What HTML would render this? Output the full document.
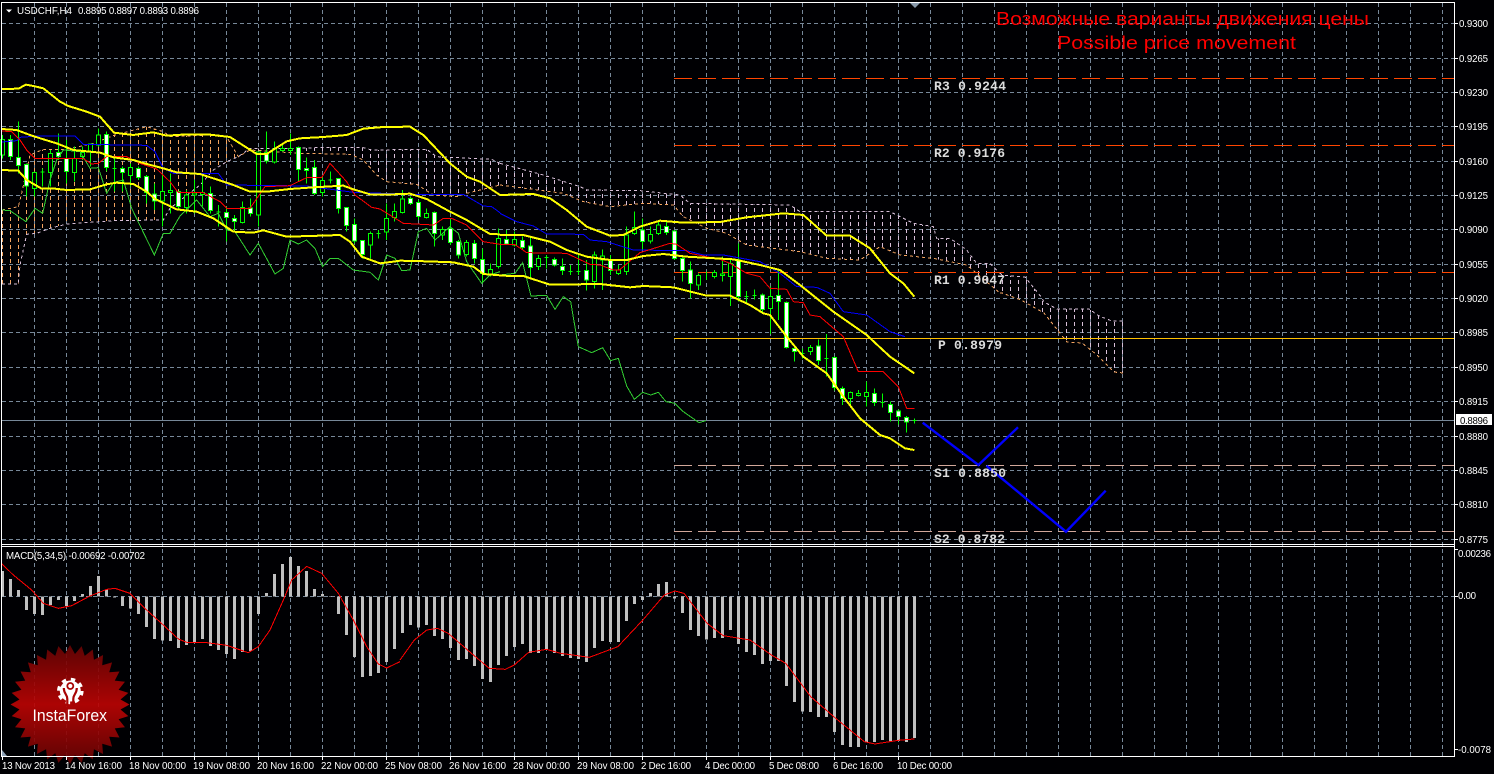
<!DOCTYPE html>
<html><head><meta charset="utf-8"><title>USDCHF,H4</title>
<style>
html,body{margin:0;padding:0;background:#000;width:1494px;height:774px;overflow:hidden}
svg{position:absolute;left:0;top:0;display:block}
svg path,svg polyline,svg polygon{vector-effect:non-scaling-stroke}
text{font-family:"Liberation Sans","Noto Sans CJK SC",sans-serif;fill:#fff}
.ax text{font-size:9.7px}
.pv text{font-family:"Liberation Mono",monospace;font-weight:bold;font-size:13px;fill:#dcdcdc}
</style></head><body>
<svg width="1494" height="774" viewBox="0 0 1494 774" xmlns="http://www.w3.org/2000/svg">
<defs>
<pattern id="gv" x="34" y="3" width="32" height="7" patternUnits="userSpaceOnUse"><rect width="1" height="4" fill="#778899"/></pattern>
<pattern id="co" width="24" height="21" patternUnits="userSpaceOnUse"><rect x="6" width="3" height="12" fill="#f4a460"/></pattern>
<pattern id="ct1" width="24" height="21" patternUnits="userSpaceOnUse"><rect x="6" width="3" height="12" fill="#d8bfd8"/></pattern>
<pattern id="ct2" width="24" height="21" patternUnits="userSpaceOnUse"><rect x="18" width="3" height="12" fill="#d8bfd8"/></pattern>
<pattern id="ct3" width="8" height="7" patternUnits="userSpaceOnUse"><rect x="2" width="1" height="4" fill="#d8bfd8"/></pattern>
<linearGradient id="lg" x1="0" y1="0" x2="0" y2="1"><stop offset="0" stop-color="#640404"/><stop offset=".5" stop-color="#bb0404"/><stop offset="1" stop-color="#640404"/></linearGradient>
<clipPath id="star">
<circle cx="0" cy="0" r="50.5"/>
<polygon points="0,-59.5 33,0 0,59.5 -33,0"/>
<polygon points="0,-59.5 33,0 0,59.5 -33,0" transform="rotate(11.25)"/>
<polygon points="0,-59.5 33,0 0,59.5 -33,0" transform="rotate(22.5)"/>
<polygon points="0,-59.5 33,0 0,59.5 -33,0" transform="rotate(33.75)"/>
<polygon points="0,-59.5 33,0 0,59.5 -33,0" transform="rotate(45)"/>
<polygon points="0,-59.5 33,0 0,59.5 -33,0" transform="rotate(56.25)"/>
<polygon points="0,-59.5 33,0 0,59.5 -33,0" transform="rotate(67.5)"/>
<polygon points="0,-59.5 33,0 0,59.5 -33,0" transform="rotate(78.75)"/>
<polygon points="0,-59.5 33,0 0,59.5 -33,0" transform="rotate(90)"/>
<polygon points="0,-59.5 33,0 0,59.5 -33,0" transform="rotate(101.25)"/>
<polygon points="0,-59.5 33,0 0,59.5 -33,0" transform="rotate(112.5)"/>
<polygon points="0,-59.5 33,0 0,59.5 -33,0" transform="rotate(123.75)"/>
<polygon points="0,-59.5 33,0 0,59.5 -33,0" transform="rotate(135)"/>
<polygon points="0,-59.5 33,0 0,59.5 -33,0" transform="rotate(146.25)"/>
<polygon points="0,-59.5 33,0 0,59.5 -33,0" transform="rotate(157.5)"/>
<polygon points="0,-59.5 33,0 0,59.5 -33,0" transform="rotate(168.75)"/>
</clipPath>
</defs>
<rect width="1494" height="774" fill="#000003"/>

<!-- grid -->
<rect x="34" y="3" width="1409" height="753" fill="url(#gv)" shape-rendering="crispEdges"/>
<path d="M2 23.5H1454M2 58.5H1454M2 92.5H1454M2 126.5H1454M2 161.5H1454M2 195.5H1454M2 229.5H1454M2 264.5H1454M2 298.5H1454M2 332.5H1454M2 367.5H1454M2 401.5H1454M2 436.5H1454M2 470.5H1454M2 504.5H1454M2 539.5H1454M2 596.5H1454" stroke="#778899" stroke-width="1" stroke-dasharray="4 3" fill="none" shape-rendering="crispEdges"/>

<!-- Ichimoku cloud -->
<g fill="none" stroke-width="1" stroke-dasharray="3 3" shape-rendering="crispEdges">
<g transform="scale(.33333)">
<polygon stroke="none" fill="url(#co)" points="6,630 55,620 65,580 80,510 90,465 130,448 200,448 280,430 345,405 440,380 490,395 510,410 630,405 680,411 715,470 680,485 640,510 600,555 510,625 490,660 340,662 200,672 150,685 110,700 80,703 60,795 55,852 6,852"/>
<polygon stroke="none" fill="url(#ct1)" points="715,470 750,445 900,445 950,443 1090,443 1115,450 1280,448 1310,470 1475,478 1500,490 1500,555 1400,580 1370,590 1300,585 1250,553 1160,545 1130,525 1090,480 1050,463 900,460 750,450"/>
<polyline stroke="#f4a460" points="6,630 55,620 65,580 80,510 90,465 130,448 200,448 280,430 345,405 440,380 490,395 510,410 630,405 680,411 715,470 750,450 900,460 1050,463 1090,480 1130,525 1160,545 1250,553 1300,585 1370,590 1400,580 1500,555"/>
<polyline stroke="#d8bfd8" points="6,852 55,852 60,795 80,703 110,700 150,685 200,672 340,662 490,660 510,625 600,555 640,510 680,485 715,470 750,445 900,445 950,443 1090,443 1115,450 1280,448 1310,470 1475,478 1500,490"/>
</g>
<g transform="translate(500,180) scale(.33333)">
<polygon stroke="none" fill="url(#ct2)" points="0,-50 130,-15 240,20 260,30 420,32 540,45 570,70 870,75 900,95 1170,95 1240,130 1300,140 1310,175 1350,175 1400,210 1430,250 1470,250 1500,280 1500,339 1400,255 1300,235 1200,225 1140,200 1080,240 980,235 900,215 740,195 680,160 620,145 550,110 520,75 430,70 330,80 250,65 190,40 0,15"/>
<polyline stroke="#d8bfd8" points="0,-50 130,-15 240,20 260,30 420,32 540,45 570,70 870,75 900,95 1170,95 1240,130 1300,140 1310,175 1350,175 1400,210 1430,250 1470,250 1500,280"/>
<polyline stroke="#f4a460" points="0,15 190,40 250,65 330,80 430,70 520,75 550,110 620,145 680,160 740,195 900,215 980,235 1080,240 1140,200 1200,225 1300,235 1400,255 1500,339"/>
</g>
<polygon stroke="none" fill="url(#ct3)" points="1000,273 1002,275 1025,277 1042,298 1044,302 1057,309 1089,309 1099,316 1112,321 1123,321 1123,373 1114,372 1097,355 1082,343 1067,342 1044,313 1021,300 1002,293 1000,293"/>
<polyline stroke="#d8bfd8" points="1000,273 1002,275 1025,277 1042,298 1044,302 1057,309 1089,309 1099,316 1112,321 1123,321"/>
<polyline stroke="#f4a460" points="1000,293 1002,293 1021,300 1044,313 1067,342 1082,343 1097,355 1114,372 1123,373"/>
</g>

<!-- price line, pivots -->
<g fill="none" shape-rendering="crispEdges">
<path d="M2 420.5H1454" stroke="#778899"/>
<path d="M674 78.5H1454M674 145.5H1454M674 272.5H1454" stroke="#ff4500" stroke-dasharray="18 6"/>
<path d="M674 338.5H1454" stroke="#ffc000"/>
<path d="M674 465.5H1454M674 531.5H1454" stroke="#d2a79a" stroke-dasharray="18 6"/>
</g>

<!-- candles part 1 -->
<g transform="scale(1 .33333)" fill="none" stroke="#00ff00" stroke-width="1" shape-rendering="crispEdges">
<path d="M2.5 405V475M10.5 405V480M18.5 365V520M26.5 490V590M34.5 515V590M42.5 505V560M50.5 450V560M58.5 400V480M66.5 420V550M74.5 440V545M82.5 440V480M90.5 430V500M98.5 385V440M106.5 395V515M114.5 470V575M122.5 500V575M130.5 490V560M138.5 500V540M146.5 525V610M154.5 550V630M162.5 520V680M170.5 520V640M178.5 575V630M186.5 570V640M194.5 540V640M202.5 530V620M210.5 560V640M218.5 615V680M226.5 620V725M234.5 645V695M242.5 605V670M250.5 595V650M258.5 455V680M266.5 395V490M274.5 425V490M282.5 430V455M290.5 400V465M298.5 440V545M306.5 472V550M314.5 480V585M322.5 530V590M330.5 515V550M338.5 535V640M346.5 622V695M354.5 655V730M362.5 720V775M370.5 695V775M378.5 690V715M386.5 610V720M394.5 610V665M402.5 570V640M410.5 590V615M418.5 600V660M426.5 625V655M434.5 635V740M442.5 680V720M450.5 655V735M458.5 720V775M466.5 720V770M474.5 720V790M482.5 745V850M490.5 790V830M498.5 685V805"/>
<path fill="#000" d="M.5 418h4v47h-4zM32.5 517h4v48h-4zM48.5 460h4v58h-4zM72.5 475h4v43h-4zM80.5 458h4v12h-4zM88.5 432h4v23h-4zM96.5 405h4v30h-4zM128.5 503h4v24h-4zM160.5 575h4v28h-4zM168.5 571h4v6h-4zM184.5 585h4v37h-4zM192.5 579h4v6h-4zM200.5 578h4v6h-4zM240.5 622h4v46h-4zM256.5 456h4v189h-4zM272.5 447h4v39h-4zM280.5 445h4v7h-4zM288.5 446h4v6h-4zM320.5 541h4v37h-4zM368.5 700h4v35h-4zM384.5 655h4v41h-4zM392.5 635h4v17h-4zM400.5 597h4v41h-4zM424.5 640h4v12h-4zM440.5 688h4v17h-4zM464.5 728h4v35h-4zM488.5 808h4v14h-4zM496.5 715h4v85h-4z"/>
<path fill="#fff" d="M8.5 418h4v52h-4zM16.5 472h4v24h-4zM24.5 493h4v65h-4zM56.5 458h4v12h-4zM64.5 475h4v40h-4zM104.5 403h4v99h-4zM120.5 505h4v13h-4zM136.5 505h4v27h-4zM144.5 530h4v48h-4zM152.5 582h4v21h-4zM176.5 575h4v45h-4zM208.5 580h4v52h-4zM224.5 638h4v14h-4zM232.5 656h4v8h-4zM248.5 624h4v16h-4zM264.5 457h4v26h-4zM296.5 443h4v65h-4zM304.5 505h4v6h-4zM312.5 503h4v77h-4zM336.5 535h4v90h-4zM344.5 622h4v54h-4zM352.5 673h4v50h-4zM360.5 722h4v42h-4zM408.5 595h4v15h-4zM416.5 607h4v43h-4zM432.5 638h4v62h-4zM448.5 686h4v42h-4zM456.5 725h4v40h-4zM472.5 730h4v45h-4zM480.5 778h4v42h-4z"/>
<path d="M40.5 516h4M112.5 505h4M216.5 636h4M328.5 540h4M376.5 700h4"/>
</g>
<!-- candles part 2 -->
<g transform="translate(0,180) scale(1 .33333)" fill="none" stroke="#00ff00" stroke-width="1" shape-rendering="crispEdges">
<path d="M506.5 150V195M514.5 155V200M522.5 170V210M530.5 170V295M538.5 225V270M546.5 225V265M554.5 232V260M562.5 235V285M570.5 255V285M578.5 225V285M586.5 240V332M594.5 215V325M602.5 208V330M610.5 225V285M618.5 255V285M626.5 140V285M634.5 95V165M642.5 115V210M650.5 140V190M658.5 120V165M666.5 125V165M674.5 150V240M682.5 230V305M690.5 245V355M698.5 280V330M706.5 275V300M714.5 270V295M722.5 230V305M730.5 240V378M738.5 190V365M746.5 333V370M754.5 328V358M762.5 340V400M770.5 320V462M778.5 265V420M786.5 365V505M794.5 505V545M802.5 505V535M810.5 495V525M818.5 478V555M826.5 462V590M834.5 530V632M842.5 620V675M850.5 635V680M858.5 630V650M866.5 605V680M874.5 625V678M882.5 640V682M890.5 665V725M898.5 688V733M906.5 708V758M914.5 716V730"/>
<path fill="#000" d="M512.5 178h4v17h-4zM536.5 235h4v25h-4zM592.5 225h4v80h-4zM600.5 228h4v12h-4zM616.5 270h4v10h-4zM624.5 165h4v110h-4zM632.5 143h4v17h-4zM648.5 163h4v20h-4zM656.5 135h4v25h-4zM696.5 287h4v28h-4zM712.5 278h4v12h-4zM720.5 282h4v5h-4zM728.5 250h4v40h-4zM768.5 350h4v35h-4zM808.5 502h4v13h-4zM848.5 637h4v18h-4zM856.5 640h4v7h-4zM864.5 637h4v13h-4z"/>
<path fill="#fff" d="M504.5 178h4v14h-4zM520.5 182h4v21h-4zM528.5 198h4v64h-4zM552.5 238h4v17h-4zM560.5 259h4v13h-4zM584.5 272h4v28h-4zM608.5 240h4v32h-4zM640.5 150h4v34h-4zM664.5 140h4v18h-4zM672.5 153h4v82h-4zM680.5 235h4v37h-4zM688.5 270h4v40h-4zM736.5 240h4v110h-4zM760.5 345h4v43h-4zM776.5 347h4v18h-4zM784.5 367h4v136h-4zM792.5 506h4v8h-4zM816.5 498h4v44h-4zM832.5 532h4v90h-4zM840.5 625h4v30h-4zM872.5 640h4v28h-4zM888.5 673h4v24h-4zM896.5 693h4v16h-4zM904.5 712h4v14h-4z"/>
<path d="M544.5 232h4M568.5 275h4M576.5 275h4M744.5 350h4M752.5 347h4M800.5 520h4M824.5 536h4M880.5 668h4M912.5 722h4"/>
</g>

<!-- indicator lines zoom 1 -->
<g transform="scale(.33333)" fill="none" shape-rendering="crispEdges">
<polyline stroke="#32cd32" stroke-width="1" points="6,630 30,632 78,665 105,625 128,640 150,540 170,480 190,450 240,455 270,505 295,503 320,580 340,548 370,540 395,625 463,765 490,700 510,700 540,648 590,600 630,650 655,640 680,690 705,695 750,765 775,730 825,822 850,805 870,720 895,732 920,720 945,745 968,800 990,775 1015,775 1060,810 1110,817 1135,840 1160,765 1185,775 1205,812 1230,810 1255,695 1280,685 1305,720 1350,680 1375,700 1400,785 1445,850 1470,825 1500,815"/>
<polyline stroke="#0000ff" stroke-width="1" points="6,426 50,422 60,412 115,408 225,408 250,433 440,436 465,455 490,505 520,520 655,520 680,555 920,558 1060,577 1240,583 1390,583 1450,618 1475,620 1500,638"/>
<polyline stroke="#ff0000" stroke-width="1" points="6,393 35,395 60,420 80,450 105,475 250,476 275,492 295,490 320,470 380,470 420,490 470,507 510,545 535,578 610,578 660,605 680,625 750,625 795,560 870,557 920,533 965,533 990,490 1040,545 1065,585 1115,622 1140,627 1210,670 1300,675 1330,655 1355,655 1400,675 1450,725 1500,733"/>
<g stroke="#ffff00" stroke-width="2">
<polyline points="6,267 55,266 78,254 100,258 130,265 180,305 205,318 260,335 300,350 342,398 400,405 460,397 500,407 560,403 630,404 690,411 770,462 800,462 860,424 900,415 970,411 1040,405 1090,386 1150,381 1230,380 1270,405 1350,490 1400,530 1440,545 1500,585"/>
<polyline points="6,387 50,390 90,405 130,418 170,430 220,450 300,458 340,472 400,480 440,492 490,505 530,517 600,522 640,535 700,555 750,575 800,575 870,567 940,562 1030,557 1060,568 1110,583 1180,583 1230,581 1280,597 1350,635 1400,660 1470,702 1500,703"/>
<polyline points="6,510 55,512 80,540 125,566 165,566 200,570 270,568 320,553 350,548 400,552 440,575 465,597 530,628 590,635 640,655 700,695 760,698 790,691 860,710 930,708 1020,705 1050,725 1085,770 1140,790 1180,785 1200,782 1280,784 1360,787 1420,800 1450,822 1500,826"/>
</g>
</g>
<!-- indicator lines zoom 2 -->
<g transform="translate(500,180) scale(.33333)" fill="none" shape-rendering="crispEdges">
<polyline stroke="#32cd32" stroke-width="1" points="0,285 45,280 68,248 93,348 140,346 165,388 190,350 212,365 235,500 275,518 308,503 332,542 355,535 380,618 403,658 428,637 452,645 475,637 498,665 525,670 550,695 597,728 618,722"/>
<polyline stroke="#0000ff" stroke-width="1" points="0,100 50,125 100,138 140,162 250,163 270,180 320,185 400,210 560,212 610,225 670,225 780,245 840,280 890,320 950,322 990,340 1030,395 1100,405 1170,455 1215,470"/>
<polyline stroke="#ff0000" stroke-width="1" points="0,193 45,194 80,218 200,220 270,253 300,255 340,270 358,270 420,218 510,190 530,193 570,220 660,238 690,250 740,280 780,290 810,325 860,328 880,365 910,368 930,405 960,410 1030,470 1075,575 1150,575 1195,620 1220,685 1243,686"/>
<g stroke="#ffff00" stroke-width="2">
<polyline points="0,45 100,42 150,55 200,90 260,140 330,167 370,165 420,140 480,122 550,128 660,126 740,112 850,100 910,105 980,167 1050,167 1110,205 1170,280 1210,310 1243,350"/>
<polyline points="0,165 70,165 150,185 200,210 260,230 330,240 380,240 430,228 490,222 560,230 700,238 780,255 840,270 900,315 1000,395 1100,465 1170,530 1243,580"/>
<polyline points="0,287 70,288 150,314 300,312 390,322 430,318 520,322 620,347 690,347 750,375 790,400 810,405 860,470 910,530 980,580 1030,650 1080,715 1140,765 1170,775 1215,805 1243,810"/>
</g>
</g>

<!-- forecast lines -->
<g fill="none" stroke="#0000ff" stroke-width="2.4">
<polyline points="922.7,422.7 978.4,465 1018,427.3"/>
<polyline points="986.4,465.7 1066,531.7 1105.7,490.7"/>
</g>

<!-- MACD histogram -->
<g transform="translate(0,540) scale(1 .33333)" fill="none" shape-rendering="crispEdges">
<path stroke="#c0c0c0" stroke-width="3" d="M2.5 169V93M10.5 169V117M18.5 169V150M26.5 169V210M34.5 169V222M42.5 169V225M50.5 169V195M58.5 169V180M66.5 169V198M74.5 169V183M82.5 169V162M90.5 169V138M98.5 169V108M106.5 169V148M114.5 169V173M122.5 169V198M130.5 169V205M138.5 169V222M146.5 169V261M154.5 169V297M162.5 169V301M170.5 169V303M178.5 169V324M186.5 169V315M194.5 169V306M202.5 169V297M210.5 169V318M218.5 169V330M226.5 169V342M234.5 169V357M242.5 169V336M250.5 169V333M258.5 169V222M266.5 169V159M274.5 169V102M282.5 169V72M290.5 169V51M298.5 169V78M306.5 169V93M314.5 169V147M322.5 169V162M330.5 169V171M338.5 169V222M346.5 169V285M354.5 169V351M362.5 169V411M370.5 169V408M378.5 169V399M386.5 169V366M394.5 169V327M402.5 169V279M410.5 169V255M418.5 169V262M426.5 169V255M434.5 169V288M442.5 169V297M450.5 169V324M458.5 169V360M466.5 169V357M474.5 169V378M482.5 169V417M490.5 169V426M498.5 169V375M506.5 169V348M514.5 169V321M522.5 169V312M530.5 169V339M538.5 169V339M546.5 169V330M554.5 169V339M562.5 169V348M570.5 169V354M578.5 169V357M586.5 169V366M594.5 169V324M602.5 169V303M610.5 169V306M618.5 169V306M626.5 169V243M634.5 169V192M642.5 169V180M650.5 169V159M658.5 169V132M666.5 169V126M674.5 169V175M682.5 169V219M690.5 169V270M698.5 169V288M706.5 169V298M714.5 169V294M722.5 169V294M730.5 169V270M738.5 169V312M746.5 169V336M754.5 169V345M762.5 169V372M770.5 169V363M778.5 169V363M786.5 169V438M794.5 169V486M802.5 169V514M810.5 169V516M818.5 169V531M826.5 169V531M834.5 169V576M842.5 169V615M850.5 169V621M858.5 169V621M866.5 169V606M874.5 169V606M882.5 169V600M890.5 169V603M898.5 169V603M906.5 169V606M914.5 169V594"/>
</g>
<g transform="translate(0,540) scale(.33333)" fill="none" shape-rendering="crispEdges">
<polyline stroke="#ff0000" stroke-width="1" points="6,72 40,105 95,150 130,190 175,205 215,197 270,168 320,148 345,145 390,160 440,210 490,255 535,297 560,307 620,308 680,316 745,338 775,320 810,270 850,180 875,120 920,79 965,100 1015,160 1060,240 1100,320 1135,372 1160,384 1200,365"/>
</g>
<g transform="translate(400,540) scale(.35714 .33333)" fill="none" shape-rendering="crispEdges">
<polyline stroke="#ff0000" stroke-width="1" points="0,360 40,300 75,270 105,265 135,280 200,340 250,385 295,388 320,375 360,337 410,328 450,340 530,352 610,320 680,240 740,165 770,153 795,160 860,250 905,287 980,300 1040,345 1080,370 1150,470 1220,535 1300,605 1330,612 1395,601 1440,597"/>
</g>

<!-- logo -->
<g transform="translate(70,704.5)"><rect x="-60" y="-60" width="120" height="120" fill="url(#lg)" clip-path="url(#star)" opacity=".92"/></g>
<g transform="translate(70.3,691)" fill="none">
<circle r="10.5" fill="#fff"/>
<circle r="11.8" stroke="#fff" stroke-width="3" stroke-dasharray="4.4 4.9"/>
<path d="M-6.5-3C-6.5 3-3 3-3 8V15M6.5-3C6.5 3 3 3 3 8V15" stroke="#a80404" stroke-width="2.2"/>
<circle cy="-5" r="3" stroke="#a80404" stroke-width="1.8" fill="#fff"/>
</g>
<text x="32.5" y="721" font-size="16.5" textLength="74.5" lengthAdjust="spacingAndGlyphs">InstaForex</text>

<!-- frame -->
<g fill="#fff" shape-rendering="crispEdges">
<rect x="1" y="2" width="1454" height="1"/>
<rect x="1" y="2" width="1" height="755"/>
<rect x="1" y="544" width="1454" height="1"/>
<rect x="1" y="546" width="1454" height="1"/>
<rect x="1" y="756" width="1454" height="1"/>
<rect x="1454" y="2" width="1" height="755"/>
<path d="M1455 23h3v1h-3zM1455 58h3v1h-3zM1455 92h3v1h-3zM1455 126h3v1h-3zM1455 161h3v1h-3zM1455 195h3v1h-3zM1455 229h3v1h-3zM1455 264h3v1h-3zM1455 298h3v1h-3zM1455 332h3v1h-3zM1455 367h3v1h-3zM1455 401h3v1h-3zM1455 436h3v1h-3zM1455 470h3v1h-3zM1455 504h3v1h-3zM1455 539h3v1h-3zM1455 549h3v1h-3zM1455 596h3v1h-3zM1455 749h3v1h-3z"/>
<path d="M2 757h1v3h-1zM66 757h1v3h-1zM130 757h1v3h-1zM194 757h1v3h-1zM258 757h1v3h-1zM322 757h1v3h-1zM386 757h1v3h-1zM450 757h1v3h-1zM514 757h1v3h-1zM578 757h1v3h-1zM642 757h1v3h-1zM706 757h1v3h-1zM770 757h1v3h-1zM834 757h1v3h-1zM898 757h1v3h-1z"/>
</g>
<polygon points="2,750 7,756 2,756" fill="#8fa3b8"/>
<polygon points="910,3 920,3 915,8" fill="#8899aa"/>
<polygon points="6,9.5 12,9.5 9,12.5" fill="#fff"/>

<!-- header text -->
<text x="17" y="14" font-size="9.7" fill="#e8f0f8" textLength="55" lengthAdjust="spacingAndGlyphs">USDCHF,H4</text>
<text x="78" y="14" font-size="9.7" textLength="121" lengthAdjust="spacing">0.8895 0.8897 0.8893 0.8896</text>
<text x="6" y="559" font-size="9.7" textLength="139" lengthAdjust="spacing">MACD(5,34,5) -0.00692 -0.00702</text>

<!-- title -->
<text x="996" y="25" font-size="18.5" style="fill:#ff0000" textLength="373" lengthAdjust="spacingAndGlyphs">Возможные варианты движения цены</text>
<text x="1057" y="49" font-size="18.5" style="fill:#ff0000" textLength="239" lengthAdjust="spacingAndGlyphs">Possible price movement</text>

<!-- pivots -->
<g class="pv">
<text x="934" y="90" textLength="72">R3 0.9244</text>
<text x="934" y="157" textLength="71">R2 0.9176</text>
<text x="934" y="284" textLength="71">R1 0.9047</text>
<text x="938" y="349" textLength="64">P 0.8979</text>
<text x="934" y="477" textLength="72">S1 0.8850</text>
<text x="934" y="543" textLength="71">S2 0.8782</text>
</g>

<!-- price axis -->
<g class="ax">
<text x="1459" y="27" textLength="29">0.9300</text>
<text x="1459" y="62" textLength="29">0.9265</text>
<text x="1459" y="96" textLength="29">0.9230</text>
<text x="1459" y="130" textLength="29">0.9195</text>
<text x="1459" y="165" textLength="29">0.9160</text>
<text x="1459" y="199" textLength="29">0.9125</text>
<text x="1459" y="233" textLength="29">0.9090</text>
<text x="1459" y="268" textLength="29">0.9055</text>
<text x="1459" y="302" textLength="29">0.9020</text>
<text x="1459" y="336" textLength="29">0.8985</text>
<text x="1459" y="371" textLength="29">0.8950</text>
<text x="1459" y="405" textLength="29">0.8915</text>
<rect x="1456" y="414" width="36" height="11" fill="#fff"/>
<text x="1460" y="424" textLength="28" style="fill:#000">0.8896</text>
<text x="1459" y="440" textLength="29">0.8880</text>
<text x="1459" y="474" textLength="29">0.8845</text>
<text x="1459" y="508" textLength="29">0.8810</text>
<text x="1459" y="543" textLength="29">0.8775</text>
<text x="1458" y="557" textLength="33">0.00236</text>
<text x="1458" y="599" textLength="18">0.00</text>
<text x="1458" y="753" textLength="33">-0.0078</text>
</g>

<!-- time axis -->
<g class="ax">
<text x="2" y="769" textLength="53">13 Nov 2013</text>
<text x="65" y="769" textLength="57">14 Nov 16:00</text>
<text x="129" y="769" textLength="57">18 Nov 00:00</text>
<text x="193" y="769" textLength="57">19 Nov 08:00</text>
<text x="257" y="769" textLength="57">20 Nov 16:00</text>
<text x="321" y="769" textLength="57">22 Nov 00:00</text>
<text x="385" y="769" textLength="57">25 Nov 08:00</text>
<text x="449" y="769" textLength="57">26 Nov 16:00</text>
<text x="513" y="769" textLength="57">28 Nov 00:00</text>
<text x="577" y="769" textLength="57">29 Nov 08:00</text>
<text x="641" y="769" textLength="50">2 Dec 16:00</text>
<text x="705" y="769" textLength="50">4 Dec 00:00</text>
<text x="769" y="769" textLength="50">5 Dec 08:00</text>
<text x="833" y="769" textLength="50">6 Dec 16:00</text>
<text x="897" y="769" textLength="55">10 Dec 00:00</text>
</g>
</svg>
</body></html>
